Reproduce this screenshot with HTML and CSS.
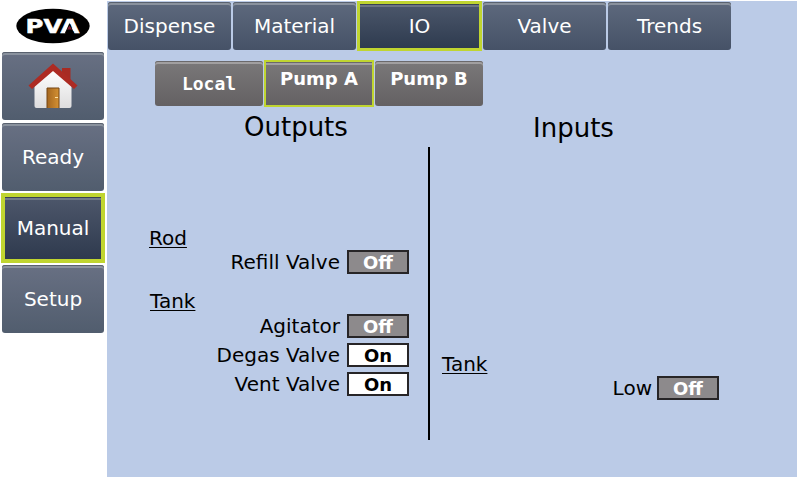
FILE: index.html
```html
<!DOCTYPE html>
<html lang="en">
<head>
<meta charset="utf-8">
<title>PVA IO</title>
<link rel="stylesheet" href="styles.css">
</head>
<body>
<div class="app">
  <aside class="sidebar">
    <svg class="logo" width="74" height="36" viewBox="0 0 74 36">
      <ellipse cx="37" cy="18" rx="36.7" ry="17.3" fill="#000"/>
      <text class="logo-text" x="9.500" y="25" textLength="54" lengthAdjust="spacingAndGlyphs">PVA</text>
      <path d="M53.500 15l-4.800 10.500h9.600z" fill="#000"/>
      <path d="M53.500 17.500l-2.500 4h5z" fill="#7c1a31"/>
    </svg>
    <nav class="side-nav">
      <button class="btn side-btn">
        <svg width="50" height="46" viewBox="0 0 50 46">
          <defs>
            <linearGradient id="wall" x1="0" y1="0" x2="0" y2="1"><stop offset="0" stop-color="#fff"/><stop offset="1" stop-color="#deddde"/></linearGradient>
            <linearGradient id="door"><stop offset="0" stop-color="#a4661f"/><stop offset="1" stop-color="#d49133"/></linearGradient>
          </defs>
          <path d="M34 5h8.500v16l-8.500-8z" fill="#a72b23"/>
          <path d="M6.500 20L25 6l18.500 14v23q0 2-2 2h-33q-2 0-2-2z" fill="url(#wall)"/>
          <path d="M25 .5L.5 22.500l3.500 3.500L25 8l21 18 3.500-3.500z" fill="#ad2b23"/>
          <path d="M19 45V25h12v20" fill="url(#door)" stroke="#754512" stroke-width="1"/>
          <path d="M27 34.500h3" stroke="#ffe0a1" stroke-width="1"/>
        </svg>
      </button>
      <button class="btn side-btn">Ready</button>
      <button class="btn side-btn side-active">Manual</button>
      <button class="btn side-btn">Setup</button>
    </nav>
  </aside>
  <main class="panel">
    <nav class="tabs">
      <button class="btn tab">Dispense</button>
      <button class="btn tab">Material</button>
      <button class="btn tab tab-active">IO</button>
      <button class="btn tab">Valve</button>
      <button class="btn tab">Trends</button>
    </nav>
    <nav class="subtabs">
      <button class="btn subtab mono">Local</button>
      <button class="btn subtab subtab-active">Pump A</button>
      <button class="btn subtab raised">Pump B</button>
    </nav>
    <div class="io">
      <section class="outputs">
        <h2>Outputs</h2>
        <h3 class="rod">Rod</h3>
        <div class="row"><span>Refill Valve</span><b class="state off">Off</b></div>
        <h3 class="tank">Tank</h3>
        <div class="row"><span>Agitator</span><b class="state off">Off</b></div>
        <div class="row"><span>Degas Valve</span><b class="state">On</b></div>
        <div class="row"><span>Vent Valve</span><b class="state">On</b></div>
      </section>
      <div class="divider"></div>
      <section class="inputs">
        <h2>Inputs</h2>
        <h3 class="tank">Tank</h3>
        <div class="row"><span>Low</span><b class="state off">Off</b></div>
      </section>
    </div>
  </main>
</div>
</body>
</html>
```
FILE: styles.css
```css
* { box-sizing: border-box; }
body { margin: 0; background: #fff; color: #000; font-family: "DejaVu Sans", sans-serif; font-size: 20px; overflow: hidden; }
.app { display: flex; width: 797px; height: 477px; }
.sidebar { width: 107px; flex: none; }
.logo { display: block; margin: 8px 0 0 16px; }
.logo-text { font: bold 20px "DejaVu Sans", sans-serif; fill: #fff; stroke: #fff; stroke-width: .5px; }
.side-nav { display: flex; flex-direction: column; gap: 3px; padding: 8px 0 0 2px; }
.btn {
  display: flex; align-items: center; justify-content: center; flex: none;
  margin: 0; padding: 0; border: 0; border-radius: 3px;
  font: 20px/24px "DejaVu Sans", sans-serif; color: #fff;
  box-shadow: inset 0 1px #59616e, inset 0 3px #8a929e;
}
.side-btn { width: 102px; height: 68px; background: linear-gradient(#687083, #515d6e); }
.side-active {
  width: 96px; height: 62px; margin: 3px;
  background: linear-gradient(#4d576b, #2e3a4e);
  outline: 4px solid #c0d530; border-radius: 0;
  box-shadow: inset 0 1px #394353, inset 0 3px #717b89;
}
.panel { flex: 1; margin-top: 1px; background: #bbcbe7; }
.tabs { display: flex; gap: 2px; padding: 1px 0 0 1px; }
.tab { width: 123px; height: 48px; background: linear-gradient(#5e697d, #465267); }
.tab-active {
  width: 119px; height: 44px; margin: 2px;
  background: linear-gradient(#4c576b, #2e3b4f);
  outline: 3px solid #c0d530; border-radius: 0;
  box-shadow: inset 0 1px #394353, inset 0 3px #6c7583;
}
.subtabs { display: flex; gap: 2px; padding: 11px 0 0 48px; }
.subtab {
  width: 108px; height: 45px; font-weight: bold; font-size: 18px;
  background: linear-gradient(#7a7879, #646163);
  box-shadow: inset 0 1px #6b696b, inset 0 3px #a19fa0;
}
.subtab-active { width: 106px; height: 43px; margin: 1px; padding-bottom: 9px; outline: 2px solid #c0d530; border-radius: 0; }
.raised { padding-bottom: 9px; }
.mono { font-family: "DejaVu Sans Mono", monospace; }
.io { display: flex; height: 370px; }
.outputs { width: 321px; }
.inputs { flex: 1; }
.divider { width: 2px; height: 293px; margin-top: 41px; background: #000; }
h2 { margin: 5px 0 0 137px; font-size: 26px; line-height: 32px; font-weight: normal; }
h3 { margin: 0 0 0 42px; font-size: 20px; line-height: 24px; font-weight: normal; text-decoration: underline; text-decoration-thickness: 1px; text-underline-offset: 2px; }
.rod { margin-top: 83px; }
.row { display: flex; justify-content: flex-end; align-items: center; gap: 7px; height: 24px; margin-right: 19px; }
.row + .row { margin-top: 5px; }
.outputs .tank { margin: 15px 0 1px 43px; }
.state { display: flex; align-items: center; justify-content: center; width: 62px; height: 24px; padding-top: 1px; border: 2px solid #272527; background: #fff; font-size: 18px; line-height: 19px; }
.off { background: #8d8a8c; color: #fff; }
.inputs h2 { margin: 6px 0 0 103px; }
.inputs .tank { margin: 208px 0 0 12px; }
.inputs .row { margin-right: 78px; gap: 5px; }
```
